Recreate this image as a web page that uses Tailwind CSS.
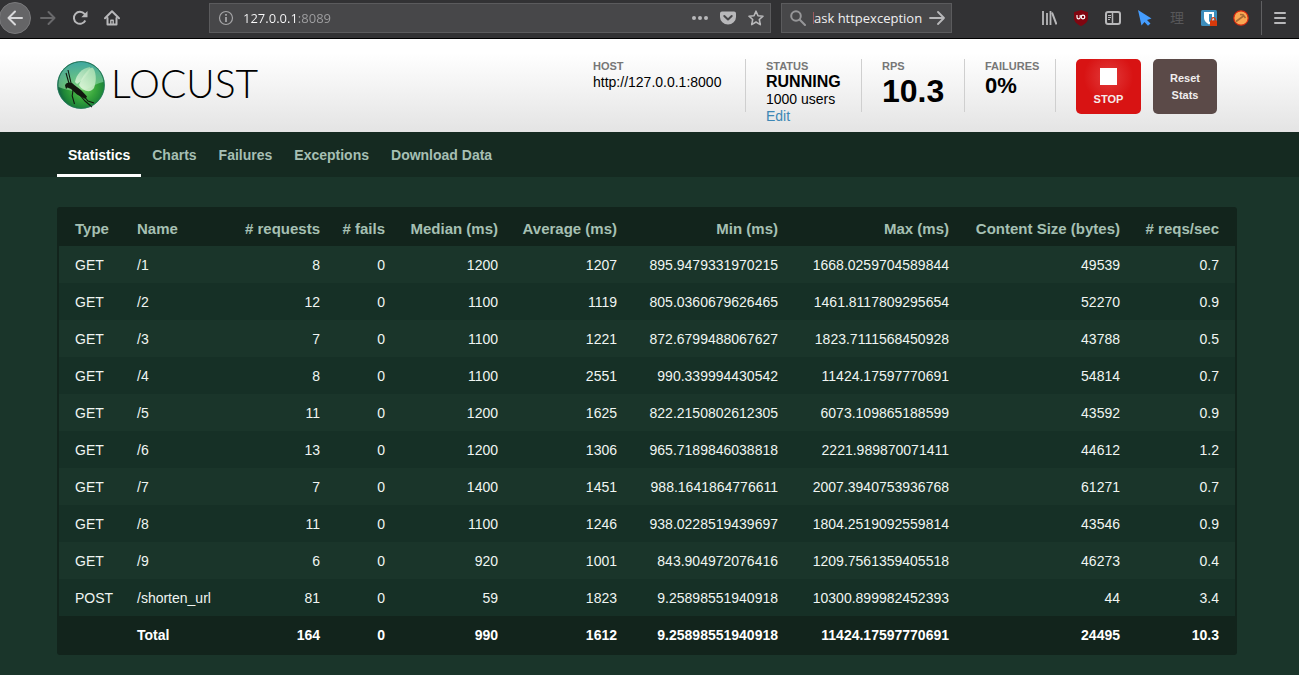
<!DOCTYPE html>
<html lang="en">
<head>
<meta charset="utf-8">
<title>Locust</title>
<script src="https://cdn.jsdelivr.net/npm/@tailwindcss/browser@4"></script>
</head>
<body class="min-h-screen bg-[#1a352a] font-['Liberation_Sans',Arial,sans-serif] text-sm">

<!-- Browser toolbar -->
<div class="flex h-[39px] items-center border-b border-black bg-[#323234] pb-0.5 font-['Open_Sans','Noto_Sans_CJK_SC',sans-serif] text-[13px] text-[#b8b8ba]">
  <button aria-label="Back" class="-ml-px grid size-8 shrink-0 place-items-center rounded-full border border-[#7a7a7c] bg-[#656567] text-[#d8d8da]">
    <svg class="size-4" viewBox="0 0 16 16" fill="none" stroke="currentColor" stroke-width="2" stroke-linecap="round" stroke-linejoin="round"><path d="M15 8H1.500M8 1.500L1.500 8L8 14.500"/></svg>
  </button>
  <button aria-label="Forward" class="ml-[9px] grid size-4 shrink-0 place-items-center text-[#69696b]">
    <svg class="size-4" viewBox="0 0 16 16" fill="none" stroke="currentColor" stroke-width="2" stroke-linecap="round" stroke-linejoin="round"><path d="M1 8H14.500M8.500 2L14.500 8L8.500 14"/></svg>
  </button>
  <button aria-label="Reload" class="ml-4 grid size-4 shrink-0 place-items-center">
    <svg class="size-4" viewBox="0 0 16 16" fill="none" stroke="currentColor" stroke-width="2"><path d="M13.300 10.500A6 6 0 1 1 12.500 3.900L13.500 5"/><path d="M15.500 1V7.200H9.300Z" fill="currentColor" stroke="none"/></svg>
  </button>
  <button aria-label="Home" class="ml-4 grid size-4 shrink-0 place-items-center">
    <svg class="size-4" viewBox="0 0 16 16" fill="none" stroke="currentColor" stroke-width="2" stroke-linecap="round" stroke-linejoin="round"><path d="M1 8.300L8 1.300L15 8.300"/><path d="M3.500 8V14.500H12.500V8"/><path d="M6.800 14V10.200H9.200V14" stroke-width="1.400"/></svg>
  </button>
  <div class="ml-[89px] flex h-[30px] min-w-0 flex-1 items-center border border-[#5b5b5d] bg-[#474749] px-2">
    <svg class="size-4 shrink-0" viewBox="0 0 16 16" fill="none" stroke="#a5a5a7"><circle cx="8" cy="8" r="6.500" stroke-width="1.200"/><path d="M8 7V12M8 4V5.800" stroke-width="1.800"/></svg>
    <input aria-label="Address" value="127.0.0.1:8089" class="ml-[9px] h-6 min-w-0 flex-1 bg-[linear-gradient(90deg,#f9f9fa_54px,#a0a0a2_54px)] bg-clip-text text-transparent outline-none">
    <button aria-label="Page actions" class="grid size-4 place-items-center"><svg class="size-4" viewBox="0 0 16 16" fill="currentColor"><circle cx="2" cy="8" r="2"/><circle cx="8" cy="8" r="2"/><circle cx="14" cy="8" r="2"/></svg></button>
    <button aria-label="Save to Pocket" class="ml-3 grid size-4 place-items-center"><svg class="size-4" viewBox="0 0 16 16"><path d="M2 1.500H14A2 2 0 0 1 16 3.500V7A8 7.500 0 0 1 0 7V3.500A2 2 0 0 1 2 1.500Z" fill="currentColor"/><path d="M4.300 6L8 9.500L11.700 6" fill="none" stroke="#474749" stroke-width="2" stroke-linecap="round" stroke-linejoin="round"/></svg></button>
    <button aria-label="Bookmark" class="-mr-0.5 ml-3 grid size-4 place-items-center"><svg class="size-4" viewBox="0 0 16 16" fill="none" stroke="currentColor" stroke-width="1.600" stroke-linejoin="round"><path d="M8 1.200L10 5.700L15 6.200L11.300 9.500L12.300 14.600L8 12L3.700 14.600L4.700 9.500L1 6.200L6 5.700Z"/></svg></button>
  </div>
  <div class="ml-2.5 flex h-[30px] w-[171px] shrink-0 items-center border border-[#5b5b5d] bg-[#474749] pr-1.5 pl-2">
    <svg class="size-4 shrink-0" viewBox="0 0 16 16" fill="none" stroke="#969698" stroke-width="2" stroke-linecap="round"><circle cx="6" cy="6" r="4.800"/><path d="M9.800 9.800L15 15"/></svg>
    <span class="ml-[7px] h-3 w-px bg-[#9a5a5c]"></span>
    <input aria-label="Search" value="ask httpexception" class="h-6 min-w-0 flex-1 text-[#f0f0f1] outline-none">
    <button aria-label="Go" class="grid size-4 shrink-0 place-items-center"><svg class="size-4" viewBox="0 0 16 16" fill="none" stroke="currentColor" stroke-width="1.800" stroke-linecap="round" stroke-linejoin="round"><path d="M1 8H15M9 2L15 8L9 14"/></svg></button>
  </div>
  <div class="ml-[89px] flex shrink-0 items-center gap-4">
    <button aria-label="Library" class="size-4"><svg class="size-4" viewBox="0 0 16 16" fill="none" stroke="currentColor" stroke-width="2"><path d="M2 1V15M6 3V15M9.500 1V15" stroke-width="1.800"/><path d="M11 2.500L15.500 14.500"/></svg></button>
    <button aria-label="uBlock" class="size-4"><svg class="size-4" viewBox="0 0 16 16"><path d="M8 0L15 2.200V8C15 12 11.500 14.500 8 16C4.500 14.500 1 12 1 8V2.200Z" fill="#800610"/><path d="M4 5V7.200A1.600 1.600 0 0 0 7.200 7.200V5" fill="none" stroke="#fff" stroke-width="1.200"/><circle cx="10" cy="7" r="1.800" fill="none" stroke="#fff" stroke-width="1.200"/></svg></button>
    <button aria-label="Sidebars" class="size-4"><svg class="size-4" viewBox="0 0 16 16" fill="none" stroke="currentColor"><rect x="1" y="2" width="14" height="12" rx="2" stroke-width="2"/><path d="M7.500 2V14" stroke-width="1.500"/><path d="M3 5.500H6M3 7.500H6M3 9.500H5"/></svg></button>
    <button aria-label="Pointer" class="size-4"><svg class="size-4" viewBox="0 0 16 16"><path d="M1 0L14.500 8.500L10 10L13.500 13.500L11 15.800L7.500 12L4.500 15.500Z" fill="#459dff"/></svg></button>
    <button aria-label="Dictionary" class="h-4 w-4 text-sm leading-4 text-[#575759]">理</button>
    <button aria-label="Bitwarden" class="size-4"><svg class="size-4" viewBox="0 0 16 16"><rect width="16" height="16" rx="1.500" fill="#3c8dbc"/><path d="M3 2H13V8C13 11 10.500 13 8 14.500C5.500 13 3 11 3 8Z" fill="#fff"/><path d="M8 4H11V8C11 10 9.500 11 8 12Z" fill="#3c8dbc"/><rect x="9" y="10.500" width="7" height="5.500" fill="#d83a0b"/><path d="M10.700 11V9.500A1.800 1.800 0 0 1 14.300 9.500V11" fill="none" stroke="#d83a0b" stroke-width="1.300"/></svg></button>
    <button aria-label="Extension" class="size-4"><svg class="size-4" viewBox="0 0 16 16"><circle cx="8" cy="8" r="7.200" fill="#f9a753" stroke="#d9280f" stroke-width="1.200"/><path d="M3 11.500L10.500 6M7 4.500L10 4.800L12.500 8" fill="none" stroke="#a86b35" stroke-width="1.600"/></svg></button>
  </div>
  <div class="ml-3 h-[34px] w-px shrink-0 bg-[#606062]"></div>
  <button aria-label="Menu" class="mr-[11px] ml-2.5 size-4 shrink-0"><svg class="size-4" viewBox="0 0 16 16" stroke="currentColor" stroke-width="2" stroke-linecap="round"><path d="M3 3H13M3 8H13M3 13H13"/></svg></button>
</div>

<!-- Page header -->
<header class="flex h-[93px] items-start bg-linear-to-b from-white from-15% to-[#e4e4e4] pt-5 pr-[82px] pl-[57px] text-black">
  <a href="#" aria-label="Locust" class="flex items-start gap-1.5 pt-0.5">
    <svg class="size-12" viewBox="0 0 48 48">
      <defs>
        <radialGradient id="orb" cx="55%" cy="55%" r="52%"><stop offset="0" stop-color="#6fcf63"/><stop offset=".5" stop-color="#37a53c"/><stop offset=".82" stop-color="#1e8638"/><stop offset="1" stop-color="#12663f"/></radialGradient>
        <linearGradient id="sky" x1="0" y1="0" x2="0" y2="1"><stop offset="0" stop-color="#3fa9a0"/><stop offset="1" stop-color="#a4e6a8" stop-opacity=".5"/></linearGradient>
        <linearGradient id="wing" x1="1" y1="0" x2="0" y2="1"><stop offset="0" stop-color="#a8dfad"/><stop offset="1" stop-color="#edfbe8"/></linearGradient>
      </defs>
      <circle cx="24" cy="24" r="23.700" fill="url(#orb)"/>
      <path d="M1.500 26A22.500 22.500 0 0 1 46.500 21C38 22 33 29 20 30C13 30 7 28 1.500 26Z" fill="url(#sky)"/>
      <path d="M18 21C19 14 25 7 33 6C35 8 29 17 20 23Z" fill="url(#wing)" opacity=".75"/>
      <path d="M22 24C25 16 31 7 35.500 6.500C39 10 40 19 37 27C34 32 26 31 22 24Z" fill="url(#wing)" opacity=".85"/>
      <path d="M8 24.500C8.500 22 12 20.500 15 22L18 24.500L24 29L30 35.500L28.500 38L20 33.500L14 28L10.500 26.500L9 28Z" fill="#12180f"/>
      <path d="M12 22.500L9 12M14 22L11 9M16 29L15.200 35L17.500 43M22 33L28 40L35 46M26 34L31 40L37 42" fill="none" stroke="#12180f" stroke-width="1.100"/>
      <circle cx="24" cy="24" r="23.400" fill="none" stroke="#287b63" stroke-width=".8"/>
    </svg>
    <span class="font-['Lato'] text-[39px] leading-[44px] font-light">LOCUST</span>
  </a>
  <div class="ml-auto flex h-[53px] shrink-0">
    <div class="w-[153px] border-r border-[#cfcfcf]">
      <div class="text-[11px] leading-[14px] font-bold text-[#777]">HOST</div>
      <div class="leading-[18px]">http://127.0.0.1:8000</div>
    </div>
    <div class="w-[116px] border-r border-[#cfcfcf] pl-5">
      <div class="text-[11px] leading-[14px] font-bold text-[#777]">STATUS</div>
      <div class="text-base leading-[18px] font-bold">RUNNING</div>
      <div class="leading-[17px]">1000 users</div>
      <a href="#" class="block leading-[17px] text-[#3d87b5]">Edit</a>
    </div>
    <div class="w-[103px] border-r border-[#cfcfcf] pl-5">
      <div class="text-[11px] leading-[14px] font-bold text-[#777]">RPS</div>
      <div class="text-[32px] leading-9 font-bold">10.3</div>
    </div>
    <div class="w-[91px] border-r border-[#cfcfcf] pl-5">
      <div class="text-[11px] leading-[14px] font-bold text-[#777]">FAILURES</div>
      <div class="text-[22px] leading-[26px] font-bold">0%</div>
    </div>
  </div>
  <button class="ml-5 flex h-[55px] w-[65px] shrink-0 flex-col items-center rounded-[5px] bg-[radial-gradient(circle_at_50%_32%,#e23b3b_0,#d81313_50%)] pt-[9px] text-[11px] leading-[14px] font-bold text-[#f6eaea]"><span class="mb-[7px] size-[17px] bg-white"></span>STOP</button>
  <button class="ml-3 h-[55px] w-16 shrink-0 rounded-[5px] bg-[#5b4a48] text-[11px] leading-[17px] font-bold text-[#f0eeee]">Reset<br>Stats</button>
</header>

<!-- Tabs -->
<nav class="flex h-[45px] bg-[#152a21] pl-[57px] font-bold text-[#a6bfb3]">
  <a href="#" class="border-b-3 border-white px-[11px] pt-[13px] leading-5 text-white">Statistics</a>
  <a href="#" class="px-[11px] pt-[13px] leading-5">Charts</a>
  <a href="#" class="px-[11px] pt-[13px] leading-5">Failures</a>
  <a href="#" class="px-[11px] pt-[13px] leading-5">Exceptions</a>
  <a href="#" class="px-[11px] pt-[13px] leading-5">Download Data</a>
</nav>

<!-- Request statistics -->
<main class="pt-[30px] pr-[62px] pb-5 pl-[57px]">
  <div class="rounded-[3px] bg-[#12241c] px-0.5 pb-0.5">
    <table class="w-full table-fixed border-collapse text-right text-[#f0f5f2] [&_td]:h-[37px] [&_td]:pr-4 [&_td:nth-child(-n+2)]:pr-0 [&_td:nth-child(-n+2)]:pl-4 [&_td:nth-child(-n+2)]:text-left [&_th]:h-[39px] [&_th]:pt-1 [&_th]:pr-4 [&_th]:whitespace-nowrap [&_th:nth-child(-n+2)]:pr-0 [&_th:nth-child(-n+2)]:pl-4 [&_th:nth-child(-n+2)]:text-left">
      <colgroup>
        <col class="w-[62px]"><col class="w-[108px]"><col class="w-[107px]"><col class="w-[65px]"><col class="w-[113px]"><col class="w-[119px]"><col class="w-[161px]"><col class="w-[171px]"><col class="w-[171px]"><col class="w-[99px]">
      </colgroup>
      <thead class="text-[15px] text-[#a6c0b3]">
        <tr><th>Type</th><th>Name</th><th># requests</th><th># fails</th><th>Median (ms)</th><th>Average (ms)</th><th>Min (ms)</th><th>Max (ms)</th><th>Content Size (bytes)</th><th># reqs/sec</th></tr>
      </thead>
      <tbody class="[&_tr:nth-child(even)]:bg-[#163026] [&_tr:nth-child(odd)]:bg-[#1a352a]">
        <tr><td>GET</td><td>/1</td><td>8</td><td>0</td><td>1200</td><td>1207</td><td>895.9479331970215</td><td>1668.0259704589844</td><td>49539</td><td>0.7</td></tr>
        <tr><td>GET</td><td>/2</td><td>12</td><td>0</td><td>1100</td><td>1119</td><td>805.0360679626465</td><td>1461.8117809295654</td><td>52270</td><td>0.9</td></tr>
        <tr><td>GET</td><td>/3</td><td>7</td><td>0</td><td>1100</td><td>1221</td><td>872.6799488067627</td><td>1823.7111568450928</td><td>43788</td><td>0.5</td></tr>
        <tr><td>GET</td><td>/4</td><td>8</td><td>0</td><td>1100</td><td>2551</td><td>990.339994430542</td><td>11424.17597770691</td><td>54814</td><td>0.7</td></tr>
        <tr><td>GET</td><td>/5</td><td>11</td><td>0</td><td>1200</td><td>1625</td><td>822.2150802612305</td><td>6073.109865188599</td><td>43592</td><td>0.9</td></tr>
        <tr><td>GET</td><td>/6</td><td>13</td><td>0</td><td>1200</td><td>1306</td><td>965.7189846038818</td><td>2221.989870071411</td><td>44612</td><td>1.2</td></tr>
        <tr><td>GET</td><td>/7</td><td>7</td><td>0</td><td>1400</td><td>1451</td><td>988.1641864776611</td><td>2007.3940753936768</td><td>61271</td><td>0.7</td></tr>
        <tr><td>GET</td><td>/8</td><td>11</td><td>0</td><td>1100</td><td>1246</td><td>938.0228519439697</td><td>1804.2519092559814</td><td>43546</td><td>0.9</td></tr>
        <tr><td>GET</td><td>/9</td><td>6</td><td>0</td><td>920</td><td>1001</td><td>843.904972076416</td><td>1209.7561359405518</td><td>46273</td><td>0.4</td></tr>
        <tr><td>POST</td><td>/shorten_url</td><td>81</td><td>0</td><td>59</td><td>1823</td><td>9.25898551940918</td><td>10300.899982452393</td><td>44</td><td>3.4</td></tr>
      </tbody>
      <tfoot class="font-bold text-white">
        <tr><td></td><td>Total</td><td>164</td><td>0</td><td>990</td><td>1612</td><td>9.25898551940918</td><td>11424.17597770691</td><td>24495</td><td>10.3</td></tr>
      </tfoot>
    </table>
  </div>
</main>
</body>
</html>
